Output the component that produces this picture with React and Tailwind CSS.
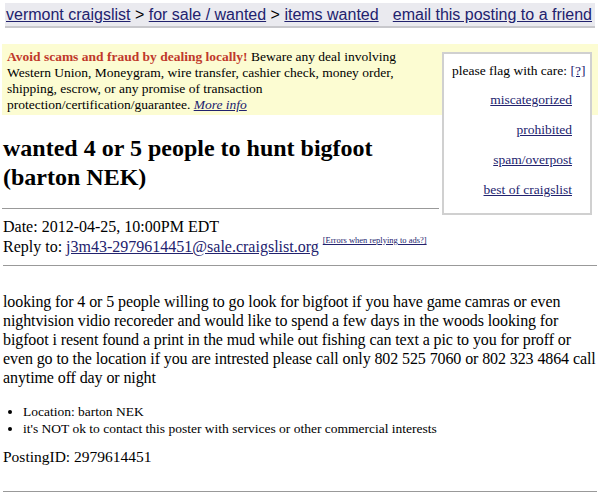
export default function App() {
  const link = "text-[#22226e] underline";
  return (
    <div className="w-[600px] h-[493px] overflow-hidden bg-white text-black font-['Liberation_Serif',serif]">
      <div className="mx-[5px] mt-[3px] h-[25px] flex items-center justify-between pl-[1px] pr-[3px] bg-[#eaeaef] border-b-2 border-[#c8c8cc] font-['Liberation_Sans',sans-serif] text-[16px] leading-none">
        <div>
          <a className={link}>vermont craigslist</a> &gt;{" "}
          <a className={link}>for sale / wanted</a> &gt;{" "}
          <a className={link}>items wanted</a>
        </div>
        <a className={link}>email this posting to a friend</a>
      </div>

      <div className="mt-[16px] px-[2px]">
        <div className="float-right mt-[8px] mr-[6px] ml-[3px] w-[150px] h-[163px] bg-white border-2 border-[#d0d0d0] px-[8px] pt-[9px] text-[13.5px] text-right">
          <div className="leading-[16px] whitespace-nowrap">
            please flag with care: <a className={link}>[?]</a>
          </div>
          <div className="flex flex-col items-end gap-[14px] mt-[13px] pr-[10px] leading-[16px]">
            <a className={link}>miscategorized</a>
            <a className={link}>prohibited</a>
            <a className={link}>spam/overpost</a>
            <a className={link}>best of craigslist</a>
          </div>
        </div>

        <div className="bg-[#fcfcd2] px-[5px] pt-[5px] pb-[6px] h-[71px] text-[13.5px] leading-[16px]">
          <b className="text-[#c0392b]">Avoid scams and fraud by dealing locally!</b> Beware any deal involving Western Union, Moneygram, wire transfer, cashier check, money order, shipping, escrow, or any promise of transaction protection/certification/guarantee.{" "}
          <a className={`${link} italic`}>More info</a>
        </div>

        <h2 className="mt-[19px] text-[24px] leading-[29px] font-bold pl-[1px]">
          wanted 4 or 5 people to hunt bigfoot (barton NEK)
        </h2>

        <hr className="flow-root mt-[16px] mr-[6px] border-t border-[#999]" />
      </div>

      <div className="px-[3px] clear-both pt-[2px] text-[16px] leading-[20px]">
        <div>Date: 2012-04-25, 10:00PM EDT</div>
        <div>
          Reply to: <a className={link}>j3m43-2979614451@sale.craigslist.org</a>{" "}
          <sup className="text-[8.5px] align-[5px]">
            <a className={link}>[Errors when replying to ads?]</a>
          </sup>
        </div>
        <hr className="mt-[8px] border-t border-[#999]" />

        <div className="mt-[26px] text-[16px] tracking-[-0.1px] leading-[19px] whitespace-nowrap">
          looking for 4 or 5 people willing to go look for bigfoot if you have game camras or even
          <br />
          nightvision vidio recoreder and would like to spend a few days in the woods looking for
          <br />
          bigfoot i resent found a print in the mud while out fishing can text a pic to you for proff or
          <br />
          even go to the location if you are intrested please call only 802 525 7060 or 802 323 4864 call
          <br />
          anytime off day or night
        </div>

        <ul className="mt-[16px] list-disc pl-[20px] text-[13.5px] leading-[17px]">
          <li>Location: barton NEK</li>
          <li>it's NOT ok to contact this poster with services or other commercial interests</li>
        </ul>

        <div className="mt-[10px] text-[15.5px]">PostingID: 2979614451</div>

        <hr className="mt-[24px] border-t border-[#999]" />
      </div>
    </div>
  );
}
